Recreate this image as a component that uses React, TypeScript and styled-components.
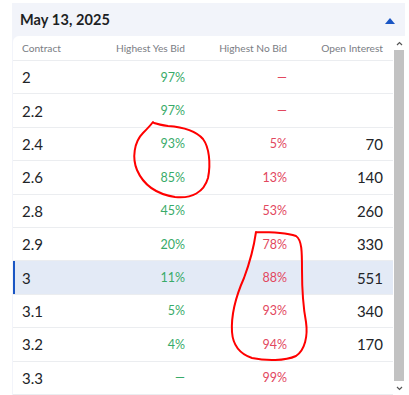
import React from "react";
import styled, { createGlobalStyle } from "styled-components";

const Global = createGlobalStyle`
  html, body { margin: 0; padding: 0; background: #ffffff; }
  body { font-family: Lato, "Liberation Sans", sans-serif; }
`;

const Page = styled.div`
  position: relative;
  width: 409px;
  height: 395px;
  overflow: hidden;
  padding: 3px 4px 0 12px;
  box-sizing: border-box;
`;

const Card = styled.div`
  background: #f2f4fa;
  display: flex;
  flex-direction: column;
`;

const Header = styled.div`
  height: 33px;
  display: flex;
  align-items: center;
  justify-content: space-between;
  padding: 0 10px 0 8px;
`;

const Title = styled.div`
  font-size: 14.5px;
  font-weight: 700;
  color: #1d1f24;
  letter-spacing: 0.1px;
`;

const Caret = styled.div`
  width: 0;
  height: 0;
  border-left: 5px solid transparent;
  border-right: 5px solid transparent;
  border-bottom: 6px solid #1a56c4;
  margin-top: 2px;
`;

const Body = styled.div`
  display: flex;
  height: 359px;
`;

const Table = styled.div`
  flex: 1;
  background: #ffffff;
  border-top-left-radius: 6px;
  margin-left: 1px;
`;

const Row = styled.div<{ $head?: boolean; $active?: boolean }>`
  display: grid;
  grid-template-columns: 80px 83px 102px 96px;
  padding: 0 9px;
  height: ${(p) => (p.$head ? "25px" : "33.4px")};
  box-sizing: border-box;
  align-items: center;
  border-bottom: 1px solid #ebedf0;
  background: ${(p) => (p.$active ? "#e3eaf6" : "transparent")};
  box-shadow: ${(p) => (p.$active ? "inset 2px 0 0 #1a56c4" : "none")};
`;

const HeadCell = styled.div<{ $right?: boolean }>`
  font-size: 10.2px;
  color: #7a7d84;
  text-align: ${(p) => (p.$right ? "right" : "left")};
  white-space: nowrap;
`;

const Contract = styled.div`
  font-size: 15px;
  color: #222428;
`;

const Pct = styled.div<{ $tone: "yes" | "no" }>`
  font-size: 12.5px;
  text-align: right;
  color: ${(p) => (p.$tone === "yes" ? "#38ab69" : "#e2475e")};
`;

const Interest = styled.div`
  font-size: 15px;
  text-align: right;
  color: #222428;
`;

const Scrollbar = styled.div`
  width: 12px;
  background: #ffffff;
  display: flex;
  flex-direction: column;
  align-items: center;
`;

const ArrowBox = styled.div`
  height: 14px;
  display: flex;
  align-items: center;
  justify-content: center;
`;

const Thumb = styled.div`
  width: 10px;
  flex: 1;
  background: #c2c2c2;
`;

const Marks = styled.svg`
  position: absolute;
  left: 0;
  top: 0;
  pointer-events: none;
`;

type R = { c: string; y: string; n: string; oi: string; active?: boolean };

const rows: R[] = [
  { c: "2", y: "97%", n: "—", oi: "" },
  { c: "2.2", y: "97%", n: "—", oi: "" },
  { c: "2.4", y: "93%", n: "5%", oi: "70" },
  { c: "2.6", y: "85%", n: "13%", oi: "140" },
  { c: "2.8", y: "45%", n: "53%", oi: "260" },
  { c: "2.9", y: "20%", n: "78%", oi: "330" },
  { c: "3", y: "11%", n: "88%", oi: "551", active: true },
  { c: "3.1", y: "5%", n: "93%", oi: "340" },
  { c: "3.2", y: "4%", n: "94%", oi: "170" },
  { c: "3.3", y: "—", n: "99%", oi: "" },
];

const Chevron = ({ up }: { up?: boolean }) => (
  <svg width="7" height="5" viewBox="0 0 7 5">
    <path
      d={up ? "M1 4 L3.5 1.5 L6 4" : "M1 1 L3.5 3.5 L6 1"}
      fill="none"
      stroke="#555"
      strokeWidth="1.2"
    />
  </svg>
);

export default function App() {
  return (
    <>
      <Global />
      <Page>
        <Card>
          <Header>
            <Title>May 13, 2025</Title>
            <Caret />
          </Header>
          <Body>
            <Table>
              <Row $head>
                <HeadCell>Contract</HeadCell>
                <HeadCell $right>Highest Yes Bid</HeadCell>
                <HeadCell $right>Highest No Bid</HeadCell>
                <HeadCell $right>Open Interest</HeadCell>
              </Row>
              {rows.map((r) => (
                <Row key={r.c} $active={r.active}>
                  <Contract>{r.c}</Contract>
                  <Pct $tone="yes">{r.y}</Pct>
                  <Pct $tone="no">{r.n}</Pct>
                  <Interest>{r.oi}</Interest>
                </Row>
              ))}
            </Table>
            <Scrollbar>
              <ArrowBox>
                <Chevron up />
              </ArrowBox>
              <Thumb />
              <ArrowBox>
                <Chevron />
              </ArrowBox>
            </Scrollbar>
          </Body>
        </Card>
        <Marks width="409" height="395" viewBox="0 0 409 395">
          <path
            d="M153 122 C150 126 147 129 143 133 C134 142 132 158 137 170 C143 184 156 194 175 197 C192 199 204 192 208 178 C211 163 209 147 203 139 C195 130 182 127 168 126 C161 125 157 124 154 123"
            fill="none"
            stroke="#f00"
            strokeWidth="2"
            strokeLinecap="round"
          />
          <path
            d="M256 232 C254 246 250 262 244 278 C236 296 231 315 232 332 C233 346 240 354 252 358 C266 361 285 361 296 356 C305 350 308 336 306 322 C303 306 302 292 302 270 C302 252 302 240 296 236 C284 232 268 232 256 232"
            fill="none"
            stroke="#f00"
            strokeWidth="2"
            strokeLinecap="round"
          />
        </Marks>
      </Page>
    </>
  );
}
